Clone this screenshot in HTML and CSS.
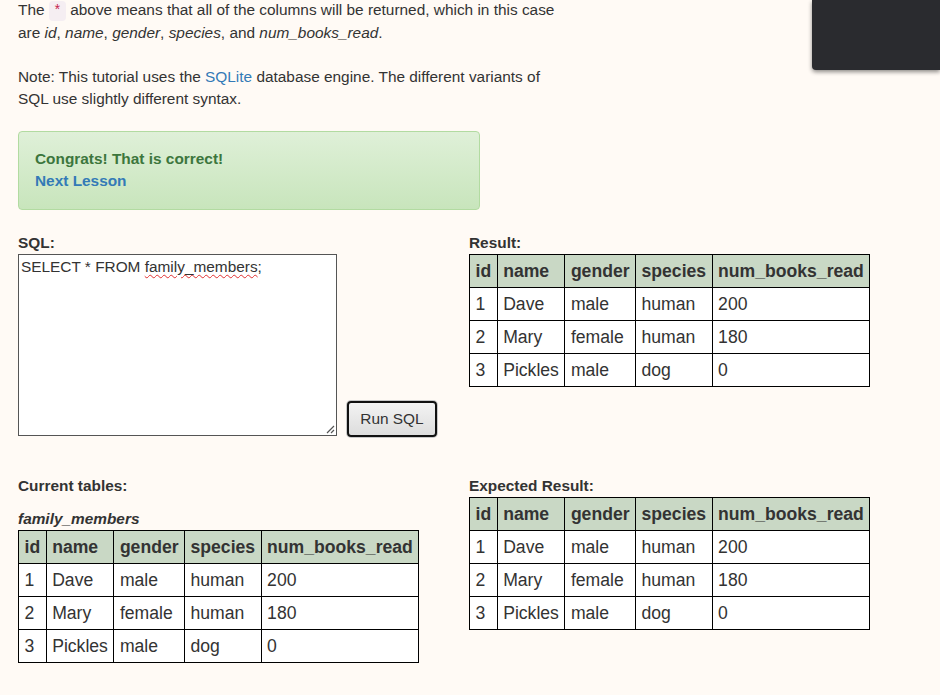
FILE: index.html
```html
<!DOCTYPE html>
<html>
<head>
<meta charset="utf-8">
<link rel="stylesheet" href="styles.css">
</head>
<body>
<div class="page">
  <p class="text">The <code class="code">*</code> above means that all of the columns will be returned, which in this case<br>are <em>id</em>, <em>name</em>, <em>gender</em>, <em>species</em>, and <em>num_books_read</em>.</p>
  <p class="text">Note: This tutorial uses the <a class="link" href="#">SQLite</a> database engine. The different variants of<br>SQL use slightly different syntax.</p>

  <div class="alert">
    <div class="alert-title">Congrats! That is correct!</div>
    <a class="alert-link" href="#">Next Lesson</a>
  </div>

  <div class="grid">
    <div class="cell">
      <div class="label">SQL:</div>
      <div class="editor">
        <div class="sqlbox">SELECT * FROM <span class="spell">family_members</span>;
          <svg class="grip" width="9" height="9" viewBox="0 0 9 9"><path d="M8 1 L1 8 M8 5 L5 8" stroke="#555" stroke-width="1.2" fill="none"/></svg>
        </div>
        <button class="run">Run SQL</button>
      </div>
    </div>
    <div class="cell">
      <div class="label">Result:</div>
      <table class="tbl">
        <tr><th>id</th><th>name</th><th>gender</th><th>species</th><th>num_books_read</th></tr>
        <tr><td>1</td><td>Dave</td><td>male</td><td>human</td><td>200</td></tr>
        <tr><td>2</td><td>Mary</td><td>female</td><td>human</td><td>180</td></tr>
        <tr><td>3</td><td>Pickles</td><td>male</td><td>dog</td><td>0</td></tr>
      </table>
    </div>
    <div class="cell">
      <div class="label">Current tables:</div>
      <div class="tname">family_members</div>
      <table class="tbl">
        <tr><th>id</th><th>name</th><th>gender</th><th>species</th><th>num_books_read</th></tr>
        <tr><td>1</td><td>Dave</td><td>male</td><td>human</td><td>200</td></tr>
        <tr><td>2</td><td>Mary</td><td>female</td><td>human</td><td>180</td></tr>
        <tr><td>3</td><td>Pickles</td><td>male</td><td>dog</td><td>0</td></tr>
      </table>
    </div>
    <div class="cell">
      <div class="label">Expected Result:</div>
      <table class="tbl">
        <tr><th>id</th><th>name</th><th>gender</th><th>species</th><th>num_books_read</th></tr>
        <tr><td>1</td><td>Dave</td><td>male</td><td>human</td><td>200</td></tr>
        <tr><td>2</td><td>Mary</td><td>female</td><td>human</td><td>180</td></tr>
        <tr><td>3</td><td>Pickles</td><td>male</td><td>dog</td><td>0</td></tr>
      </table>
    </div>
  </div>
</div>
<div class="panel"></div>
</body>
</html>
```
FILE: styles.css
```css
html, body {
  margin: 0;
  padding: 0;
  background: #fffaf5;
}
body {
  font-family: "Liberation Sans", Arial, sans-serif;
  font-size: 15.4px;
  line-height: 22px;
  color: #333;
}
.page {
  padding: 0 18px;
  margin-top: -1px;
}
.text {
  margin: 0 0 22px 0;
  white-space: nowrap;
}
.text + .text {
  margin-bottom: 21px;
}
.code {
  font-family: "Liberation Mono", monospace;
  font-size: 13.9px;
  color: #c7254e;
  background: #f5eef2;
  padding: 2px 4.4px;
  border-radius: 4px;
}
.link {
  color: #337ab7;
  text-decoration: none;
}
.alert {
  width: 428px;
  padding: 16px 16px 17px 16px;
  border: 1px solid #b2dba1;
  border-radius: 4px;
  background: linear-gradient(to bottom, #dff0d8 0%, #c8e5bc 100%);
  margin-bottom: 22px;
}
.alert-title {
  font-weight: bold;
  color: #3c763d;
}
.alert-link {
  font-weight: bold;
  color: #337ab7;
  text-decoration: none;
}
.grid {
  display: grid;
  grid-template-columns: 451px auto;
  row-gap: 39px;
}
.label {
  font-weight: bold;
  line-height: 22px;
}
.tname {
  font-weight: bold;
  font-style: italic;
  margin-top: 11px;
}
.editor {
  display: flex;
  align-items: flex-end;
  gap: 10px;
}
.sqlbox {
  position: relative;
  box-sizing: border-box;
  width: 319px;
  height: 182px;
  border: 1px solid #555;
  background: #fff;
  padding: 1px 2px;
  line-height: 22px;
  color: #333;
}
.spell {
  text-decoration: underline wavy #e03030;
  text-decoration-thickness: 1px;
  text-underline-offset: 2px;
}
.grip {
  position: absolute;
  right: 1px;
  bottom: 1px;
}
.run {
  box-sizing: border-box;
  width: 90px;
  height: 36px;
  margin-bottom: -1px;
  font-family: "Liberation Sans", Arial, sans-serif;
  font-size: 15.4px;
  color: #333;
  background: linear-gradient(to bottom, #f3f3f3, #dddddd);
  border: 2px solid #111;
  border-radius: 4px;
  box-shadow: 0 0 0 1px #c8c8c8;
  padding: 0;
}
.tbl {
  border-collapse: collapse;
  font-size: 17.6px;
  line-height: 21px;
}
.tbl th, .tbl td {
  border: 1px solid #000;
  padding: 5.5px 5.5px;
  text-align: left;
  white-space: nowrap;
}
.tbl th {
  background: #c9d8c5;
  font-weight: bold;
}
.tbl td {
  background: #fff;
}
.panel {
  position: fixed;
  top: 0;
  right: 0;
  width: 128px;
  height: 70px;
  background: #2a2b2f;
  border-bottom-left-radius: 4px;
  box-shadow: 0 2px 4px rgba(0,0,0,0.45);
}
```
